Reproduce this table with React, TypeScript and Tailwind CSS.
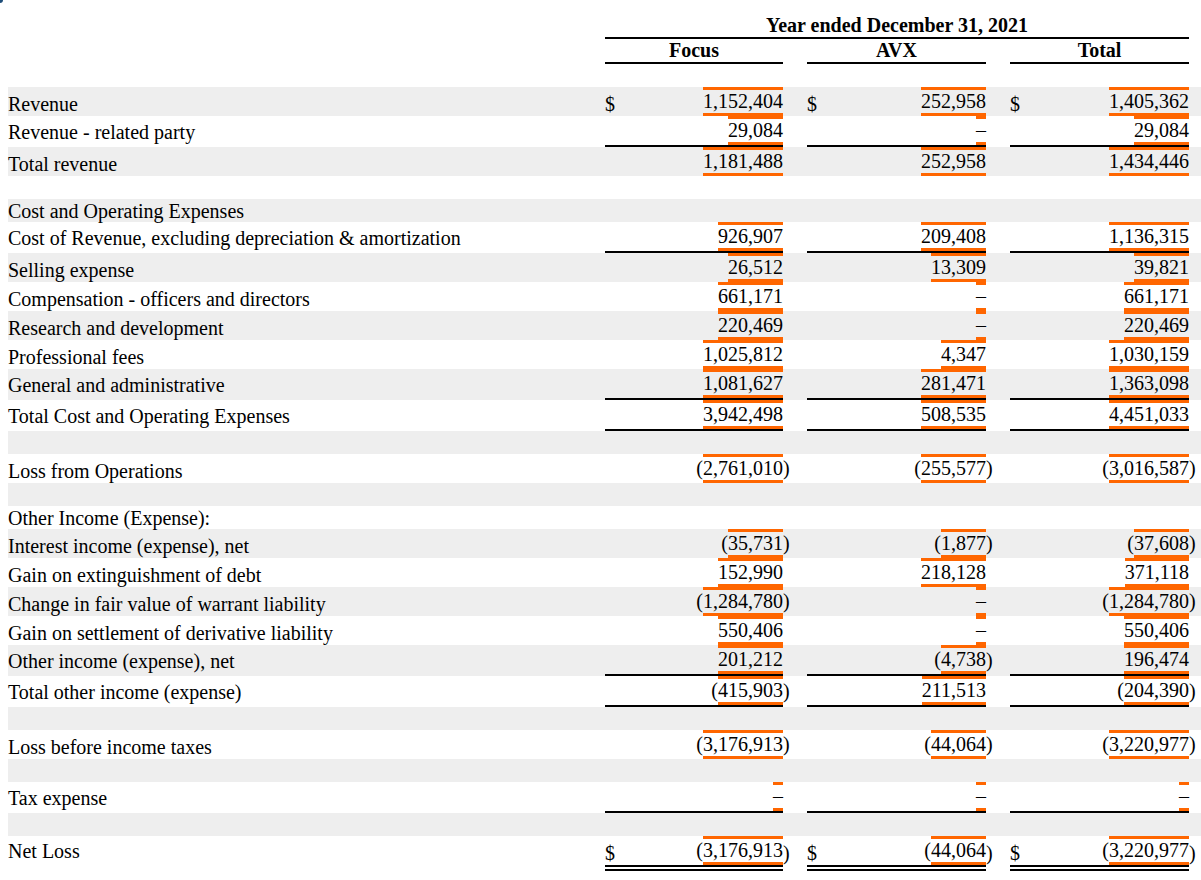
import React from 'react';

type Line = 'single' | 'double' | undefined;

type Row =
  | { kind: 'blank'; grey: boolean }
  | { kind: 'label'; label: string; grey: boolean }
  | { kind: 'data'; label: string; grey: boolean; vals: string[]; dollar?: boolean; line?: Line };

const rows: Row[] = [
  { kind: 'data', label: 'Revenue', grey: true, vals: ['1,152,404', '252,958', '1,405,362'], dollar: true },
  { kind: 'data', label: 'Revenue - related party', grey: false, vals: ['29,084', '–', '29,084'], line: 'single' },
  { kind: 'data', label: 'Total revenue', grey: true, vals: ['1,181,488', '252,958', '1,434,446'] },
  { kind: 'blank', grey: false },
  { kind: 'label', label: 'Cost and Operating Expenses', grey: true },
  { kind: 'data', label: 'Cost of Revenue, excluding depreciation & amortization', grey: false, vals: ['926,907', '209,408', '1,136,315'], line: 'single' },
  { kind: 'data', label: 'Selling expense', grey: true, vals: ['26,512', '13,309', '39,821'] },
  { kind: 'data', label: 'Compensation - officers and directors', grey: false, vals: ['661,171', '–', '661,171'] },
  { kind: 'data', label: 'Research and development', grey: true, vals: ['220,469', '–', '220,469'] },
  { kind: 'data', label: 'Professional fees', grey: false, vals: ['1,025,812', '4,347', '1,030,159'] },
  { kind: 'data', label: 'General and administrative', grey: true, vals: ['1,081,627', '281,471', '1,363,098'], line: 'single' },
  { kind: 'data', label: 'Total Cost and Operating Expenses', grey: false, vals: ['3,942,498', '508,535', '4,451,033'], line: 'single' },
  { kind: 'blank', grey: true },
  { kind: 'data', label: 'Loss from Operations', grey: false, vals: ['(2,761,010)', '(255,577)', '(3,016,587)'] },
  { kind: 'blank', grey: true },
  { kind: 'label', label: 'Other Income (Expense):', grey: false },
  { kind: 'data', label: 'Interest income (expense), net', grey: true, vals: ['(35,731)', '(1,877)', '(37,608)'] },
  { kind: 'data', label: 'Gain on extinguishment of debt', grey: false, vals: ['152,990', '218,128', '371,118'] },
  { kind: 'data', label: 'Change in fair value of warrant liability', grey: true, vals: ['(1,284,780)', '–', '(1,284,780)'] },
  { kind: 'data', label: 'Gain on settlement of derivative liability', grey: false, vals: ['550,406', '–', '550,406'] },
  { kind: 'data', label: 'Other income (expense), net', grey: true, vals: ['201,212', '(4,738)', '196,474'], line: 'single' },
  { kind: 'data', label: 'Total other income (expense)', grey: false, vals: ['(415,903)', '211,513', '(204,390)'], line: 'single' },
  { kind: 'blank', grey: true },
  { kind: 'data', label: 'Loss before income taxes', grey: false, vals: ['(3,176,913)', '(44,064)', '(3,220,977)'] },
  { kind: 'blank', grey: true },
  { kind: 'data', label: 'Tax expense', grey: false, vals: ['–', '–', '–'], line: 'single' },
  { kind: 'blank', grey: true },
  { kind: 'data', label: 'Net Loss', grey: false, vals: ['(3,176,913)', '(44,064)', '(3,220,977)'], dollar: true, line: 'double' },
];

// column widths: Focus, AVX, Total
const colWidths = ['w-[178px]', 'w-[179px]', 'w-[179px]'];
const gapWidths = ['w-[24px]', 'w-[24px]', 'flex-1'];

const ValueCell = ({ value, dollar, line, width, gap }: { value: string; dollar?: boolean; line: Line; width: string; gap: string }) => {
  const neg = value.startsWith('(');
  const num = neg ? value.slice(1, -1) : value;
  const lineCls =
    line === 'single' ? 'border-b-2 border-black' : line === 'double' ? 'border-b-[6px] border-double border-black' : '';

  return (
    <>
      <div className={`${width} shrink-0 flex items-center justify-between ${lineCls}`}>
        <span className="self-start pt-[6px]">{dollar ? '$' : ''}</span>
        <span className="flex items-center">
          {neg && <span>(</span>}
          <span className="border-y-[3px] border-[#ff6600]">{num}</span>
        </span>
      </div>
      <div className={`${gap} flex items-center`}>{neg && <span>)</span>}</div>
    </>
  );
};

export default function App() {
  return (
    <div className="relative min-h-screen bg-white pl-2 pt-[14px] text-[20px] leading-[23px] text-black font-['Liberation_Serif','Times_New_Roman',serif]">
      {/* little blue corner mark */}
      <div className="absolute left-0 top-0 h-[3px] w-[3px] rounded-br-sm bg-[#1f4e79]" />

      {/* header */}
      <div className="flex">
        <div className="w-[597px] shrink-0" />
        <div className="w-[584px] shrink-0 border-b-2 border-black text-center font-bold">Year ended December 31, 2021</div>
      </div>
      <div className="flex">
        <div className="w-[597px] shrink-0" />
        <div className="w-[178px] shrink-0 border-b-2 border-black text-center font-bold">Focus</div>
        <div className="w-[24px] shrink-0" />
        <div className="w-[179px] shrink-0 border-b-2 border-black text-center font-bold">AVX</div>
        <div className="w-[24px] shrink-0" />
        <div className="w-[179px] shrink-0 border-b-2 border-black text-center font-bold">Total</div>
      </div>
      <div className="h-[23px]" />

      {/* body */}
      {rows.map((row, i) => {
        const bg = row.grey ? 'bg-[#eeeeee]' : 'bg-white';
        if (row.kind === 'blank') return <div key={i} className={`h-[23px] ${bg}`} />;
        if (row.kind === 'label')
          return (
            <div key={i} className={`h-[23px] pt-px ${bg}`}>
              <div className="whitespace-nowrap">{row.label}</div>
            </div>
          );
        const labelPad = row.line === 'double' ? 'pt-[4px]' : row.line === 'single' ? 'pt-[5px]' : 'pt-[6px]';
        return (
          <div key={i} className={`flex ${bg}`}>
            <div className={`w-[597px] shrink-0 whitespace-nowrap ${labelPad}`}>{row.label}</div>
            {row.vals.map((v, j) => (
              <ValueCell key={j} value={v} dollar={row.dollar} line={row.line} width={colWidths[j]} gap={gapWidths[j]} />
            ))}
          </div>
        );
      })}
    </div>
  );
}
